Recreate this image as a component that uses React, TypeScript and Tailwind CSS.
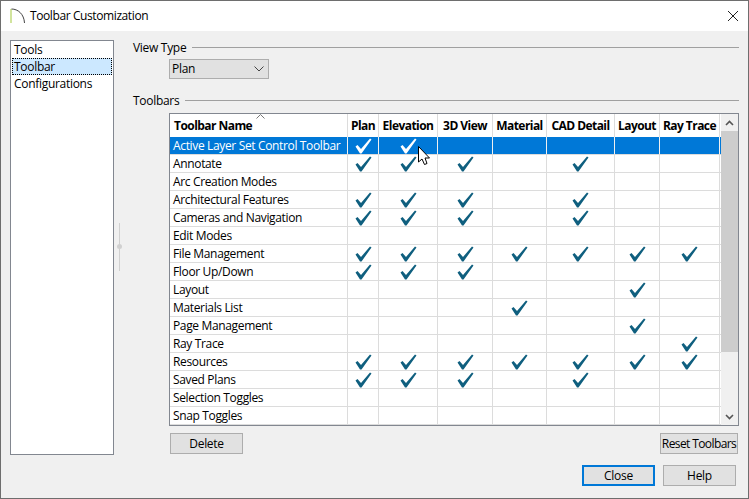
const rows: [string, number[]][] = [
  ["Active Layer Set Control Toolbar", [0, 1]],
  ["Annotate", [0, 1, 2, 4]],
  ["Arc Creation Modes", []],
  ["Architectural Features", [0, 1, 2, 4]],
  ["Cameras and Navigation", [0, 1, 2, 4]],
  ["Edit Modes", []],
  ["File Management", [0, 1, 2, 3, 4, 5, 6]],
  ["Floor Up/Down", [0, 1, 2]],
  ["Layout", [5]],
  ["Materials List", [3]],
  ["Page Management", [5]],
  ["Ray Trace", [6]],
  ["Resources", [0, 1, 2, 3, 4, 5, 6]],
  ["Saved Plans", [0, 1, 2, 4]],
  ["Selection Toggles", []],
  ["Snap Toggles", []],
];

const cols: [string, string][] = [
  ["Plan", "w-[31px]"],
  ["Elevation", "w-[59px]"],
  ["3D View", "w-[55px]"],
  ["Material", "w-[54px]"],
  ["CAD Detail", "w-[68px]"],
  ["Layout", "w-[45px]"],
  ["Ray Trace", "w-[60px]"],
];

function Check({ white }: { white: boolean }) {
  return (
    <svg width="17" height="16" viewBox="0 0 17 16" className={white ? "text-white" : "text-[#0f5f7f]"}>
      <path d="M0.5 8.5 L2.5 7 L6 11 L15 0.5 L16.5 1.5 L6.5 15.5 L5 15.5 Z" fill="currentColor" />
    </svg>
  );
}

function Btn({ label, cls }: { label: string; cls: string }) {
  return (
    <div className={`flex items-center justify-center h-[21px] border border-[#adadad] bg-[#e1e1e1] text-[12px] text-black whitespace-nowrap ${cls}`}>
      {label}
    </div>
  );
}

export default function App() {
  return (
    <div className="relative w-[749px] h-[499px] border border-[#6e6e6e] bg-[#f0f0f0] flex flex-col overflow-hidden text-black text-[12px] [font-family:'Open_Sans','Noto_Sans',sans-serif]">
      <div className="h-[30px] bg-white flex items-center shrink-0 pl-[9px]">
        <svg width="16" height="16" viewBox="0 0 16 16" className="shrink-0">
          <path d="M1 15 V1" stroke="#a4c93c" strokeWidth="1" fill="none" />
          <path d="M1.5 1 C8 1 14 6 14.5 15" stroke="#444" strokeWidth="1" fill="none" />
        </svg>
        <span className="ml-[4px] text-[12px] tracking-[-0.4px]">Toolbar Customization</span>
        <svg width="12" height="12" viewBox="0 0 12 12" className="ml-auto mr-[9px]">
          <path d="M1 1 L11 11 M11 1 L1 11" stroke="#222" strokeWidth="1" />
        </svg>
      </div>
      <div className="flex-1 flex pl-[9px] pt-[9px] pr-[9px] min-h-0">
        <div className="w-[104px] h-[415px] border border-[#828790] bg-white px-[1px] shrink-0 tracking-[-0.3px]">
          <div className="h-[17px] pl-[2px] flex items-center">Tools</div>
          <div className="h-[17px] pl-[1px] flex items-center bg-[#cce8ff] border border-dotted border-black">Toolbar</div>
          <div className="h-[17px] pl-[2px] flex items-center">Configurations</div>
        </div>
        <div className="w-[19px] shrink-0 pl-[5px]">
          <div className="relative mt-[183px] w-px h-[48px] bg-[#d0d0d0]">
            <div className="absolute left-[-2px] top-[21px] w-[5px] h-[5px] rounded-full bg-[#d0d0d0]" />
          </div>
        </div>
        <div className="flex-1 flex flex-col min-w-0 pt-[1px]">
          <div className="flex items-center h-[13px] tracking-[-0.3px]">
            <span>View Type</span>
            <div className="ml-[6px] flex-1 h-px bg-[#a0a0a0]" />
          </div>
          <div className="ml-[36px] mt-[5px] w-[100px] h-[20px] border border-[#adadad] bg-[#e1e1e1] flex items-center pl-[2px] pr-[4px] justify-between">
            <span className="tracking-[-0.3px]">Plan</span>
            <svg width="10" height="6" viewBox="0 0 10 6">
              <path d="M0.5 0.5 L5 5 L9.5 0.5" stroke="#444" fill="none" />
            </svg>
          </div>
          <div className="flex items-center h-[13px] mt-[15px] tracking-[-0.3px]">
            <span>Toolbars</span>
            <div className="ml-[6px] flex-1 h-px bg-[#a0a0a0]" />
          </div>
          <div className="ml-[36px] mt-[6px] w-[570px] h-[313px] border border-[#828790] bg-white flex">
            <div className="w-[551px] flex flex-col tracking-[-0.35px]">
              <div className="relative flex h-[23px] font-bold tracking-[-0.55px]">
                <div className="w-[178px] border-r border-[#dcdcdc] pl-[4px] flex items-center">Toolbar Name</div>
                <svg width="9" height="5" viewBox="0 0 9 5" className="absolute left-[86px] top-0">
                  <path d="M0.5 4.5 L4.5 0.5 L8.5 4.5" stroke="#777" fill="none" />
                </svg>
                {cols.map(([c, w]) => (
                  <div key={c} className={`${w} border-r border-[#dcdcdc] flex items-center justify-center whitespace-nowrap`}>{c}</div>
                ))}
              </div>
              {rows.map(([name, checks], i) => {
                const sel = i === 0;
                const line = sel ? "border-[#f0f0f0]" : "border-[#dcdcdc]";
                return (
                  <div key={name} className={`flex h-[18px] border-b border-[#dcdcdc] ${sel ? "bg-[#0078d7] text-white" : ""}`}>
                    <div className={`w-[178px] border-r ${line} pl-[3px] flex items-center whitespace-nowrap`}>{name}</div>
                    {cols.map(([c, w], j) => (
                      <div key={c} className={`${w} border-r ${line} relative flex justify-center`}>
                        {checks.includes(j) && (
                          <div className="absolute top-[1px]"><Check white={sel} /></div>
                        )}
                      </div>
                    ))}
                  </div>
                );
              })}
            </div>
            <div className="flex-1 flex flex-col bg-[#f0f0f0] min-w-0">
              <div className="h-[17px] flex items-center justify-center shrink-0">
                <svg width="9" height="6" viewBox="0 0 9 6"><path d="M1 5 L4.5 1.5 L8 5" stroke="#555" strokeWidth="1.6" fill="none" /></svg>
              </div>
              <div className="h-[221px] bg-[#cdcdcd]" />
              <div className="flex-1" />
              <div className="h-[17px] flex items-center justify-center shrink-0">
                <svg width="9" height="6" viewBox="0 0 9 6"><path d="M1 1 L4.5 4.5 L8 1" stroke="#555" strokeWidth="1.6" fill="none" /></svg>
              </div>
            </div>
          </div>
          <div className="flex justify-between ml-[37px] mr-[1px] mt-[7px] tracking-[-0.3px]">
            <Btn label="Delete" cls="w-[73px]" />
            <Btn label="Reset Toolbars" cls="w-[78px] tracking-[-0.6px]" />
          </div>
          <div className="flex justify-end gap-[8px] mt-[11px] mr-[3px] tracking-[-0.3px]">
            <div className="flex items-center justify-center w-[73px] h-[21px] border-2 border-[#0078d7] bg-[#e1e1e1]">Close</div>
            <Btn label="Help" cls="w-[73px]" />
          </div>
        </div>
      </div>
      <svg width="13" height="20" viewBox="0 0 13 20" className="absolute left-[417px] top-[145px]">
        <path d="M0.5 0.5 V16 L4 13 L6.5 18.5 L9 17.5 L7 12 H11.5 Z" fill="#fff" stroke="#000" strokeWidth="1" />
      </svg>
    </div>
  );
}
